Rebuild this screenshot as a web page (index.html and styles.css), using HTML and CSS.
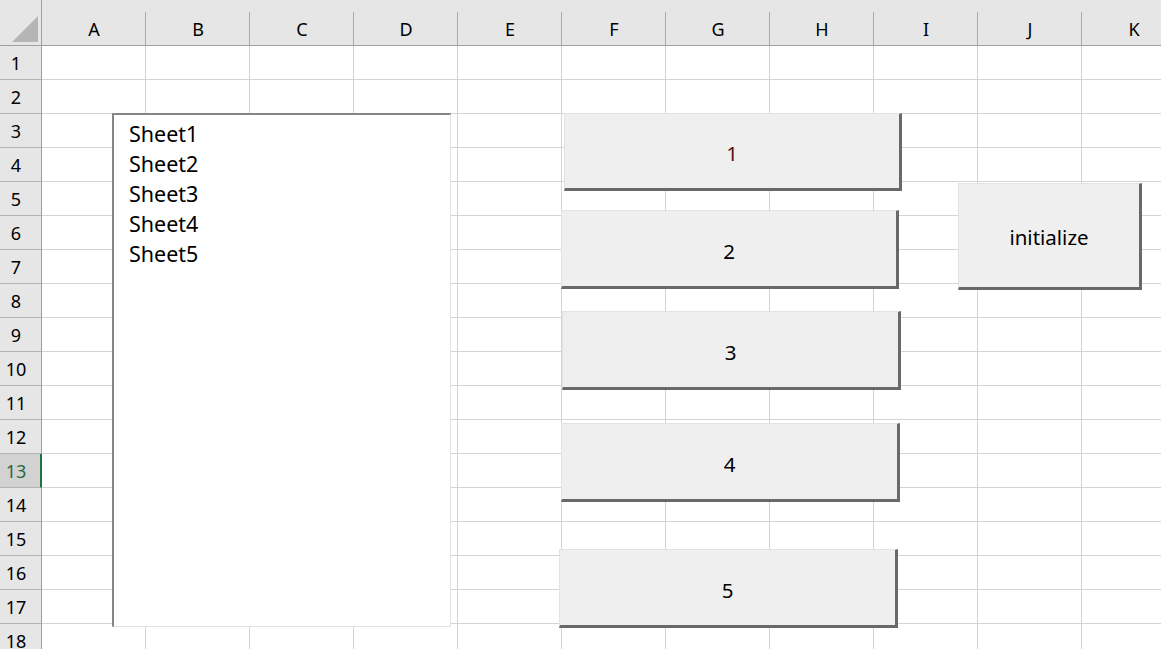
FILE: index.html
```html
<!DOCTYPE html>
<html>
<head>
<meta charset="utf-8">
<link rel="stylesheet" href="styles.css">
</head>
<body>
<div class="sheet">
  <div class="grid">
    <div class="corner"><svg class="tri" width="26" height="26" viewBox="0 0 26 26"><polygon points="26,0 26,26 0,26" fill="#b5b5b5"/></svg></div>
    <div class="ch">A</div><div class="ch">B</div><div class="ch">C</div><div class="ch">D</div><div class="ch">E</div><div class="ch">F</div><div class="ch">G</div><div class="ch">H</div><div class="ch">I</div><div class="ch">J</div><div class="ch">K</div>

    <div class="rh">1</div><div class="c"></div><div class="c"></div><div class="c"></div><div class="c"></div><div class="c"></div><div class="c"></div><div class="c"></div><div class="c"></div><div class="c"></div><div class="c"></div><div class="c"></div>
    <div class="rh">2</div><div class="c"></div><div class="c"></div><div class="c"></div><div class="c"></div><div class="c"></div><div class="c"></div><div class="c"></div><div class="c"></div><div class="c"></div><div class="c"></div><div class="c"></div>
    <div class="rh">3</div><div class="c"></div><div class="c"></div><div class="c"></div><div class="c"></div><div class="c"></div><div class="c"></div><div class="c"></div><div class="c"></div><div class="c"></div><div class="c"></div><div class="c"></div>
    <div class="rh">4</div><div class="c"></div><div class="c"></div><div class="c"></div><div class="c"></div><div class="c"></div><div class="c"></div><div class="c"></div><div class="c"></div><div class="c"></div><div class="c"></div><div class="c"></div>
    <div class="rh">5</div><div class="c"></div><div class="c"></div><div class="c"></div><div class="c"></div><div class="c"></div><div class="c"></div><div class="c"></div><div class="c"></div><div class="c"></div><div class="c"></div><div class="c"></div>
    <div class="rh">6</div><div class="c"></div><div class="c"></div><div class="c"></div><div class="c"></div><div class="c"></div><div class="c"></div><div class="c"></div><div class="c"></div><div class="c"></div><div class="c"></div><div class="c"></div>
    <div class="rh">7</div><div class="c"></div><div class="c"></div><div class="c"></div><div class="c"></div><div class="c"></div><div class="c"></div><div class="c"></div><div class="c"></div><div class="c"></div><div class="c"></div><div class="c"></div>
    <div class="rh">8</div><div class="c"></div><div class="c"></div><div class="c"></div><div class="c"></div><div class="c"></div><div class="c"></div><div class="c"></div><div class="c"></div><div class="c"></div><div class="c"></div><div class="c"></div>
    <div class="rh">9</div><div class="c"></div><div class="c"></div><div class="c"></div><div class="c"></div><div class="c"></div><div class="c"></div><div class="c"></div><div class="c"></div><div class="c"></div><div class="c"></div><div class="c"></div>
    <div class="rh">10</div><div class="c"></div><div class="c"></div><div class="c"></div><div class="c"></div><div class="c"></div><div class="c"></div><div class="c"></div><div class="c"></div><div class="c"></div><div class="c"></div><div class="c"></div>
    <div class="rh">11</div><div class="c"></div><div class="c"></div><div class="c"></div><div class="c"></div><div class="c"></div><div class="c"></div><div class="c"></div><div class="c"></div><div class="c"></div><div class="c"></div><div class="c"></div>
    <div class="rh">12</div><div class="c"></div><div class="c"></div><div class="c"></div><div class="c"></div><div class="c"></div><div class="c"></div><div class="c"></div><div class="c"></div><div class="c"></div><div class="c"></div><div class="c"></div>
    <div class="rh active">13</div><div class="c"></div><div class="c"></div><div class="c"></div><div class="c"></div><div class="c"></div><div class="c"></div><div class="c"></div><div class="c"></div><div class="c"></div><div class="c"></div><div class="c"></div>
    <div class="rh">14</div><div class="c"></div><div class="c"></div><div class="c"></div><div class="c"></div><div class="c"></div><div class="c"></div><div class="c"></div><div class="c"></div><div class="c"></div><div class="c"></div><div class="c"></div>
    <div class="rh">15</div><div class="c"></div><div class="c"></div><div class="c"></div><div class="c"></div><div class="c"></div><div class="c"></div><div class="c"></div><div class="c"></div><div class="c"></div><div class="c"></div><div class="c"></div>
    <div class="rh">16</div><div class="c"></div><div class="c"></div><div class="c"></div><div class="c"></div><div class="c"></div><div class="c"></div><div class="c"></div><div class="c"></div><div class="c"></div><div class="c"></div><div class="c"></div>
    <div class="rh">17</div><div class="c"></div><div class="c"></div><div class="c"></div><div class="c"></div><div class="c"></div><div class="c"></div><div class="c"></div><div class="c"></div><div class="c"></div><div class="c"></div><div class="c"></div>
    <div class="rh">18</div><div class="c"></div><div class="c"></div><div class="c"></div><div class="c"></div><div class="c"></div><div class="c"></div><div class="c"></div><div class="c"></div><div class="c"></div><div class="c"></div><div class="c"></div>
  </div>

  <div class="listbox">
    <div class="item">Sheet1</div>
    <div class="item">Sheet2</div>
    <div class="item">Sheet3</div>
    <div class="item">Sheet4</div>
    <div class="item">Sheet5</div>
  </div>

  <div class="btn b1"><span class="red">1</span></div>
  <div class="btn b2">2</div>
  <div class="btn b3">3</div>
  <div class="btn b4">4</div>
  <div class="btn b5">5</div>
  <div class="btn binit">initialize</div>
</div>
</body>
</html>
```

FILE: styles.css
```css
html, body {
  margin: 0;
  padding: 0;
  background: #ffffff;
  overflow: hidden;
}

.sheet {
  position: relative;
  width: 1161px;
  height: 649px;
  overflow: hidden;
  font-family: "Noto Sans", "Open Sans", sans-serif;
  color: #000;
}

.grid {
  display: grid;
  grid-template-columns: 42px repeat(11, 104px);
  grid-template-rows: 46px repeat(18, 34px);
  width: 1186px;
}

.corner {
  box-sizing: border-box;
  background: #e6e6e6;
  border-right: 1px solid #9f9f9f;
  border-bottom: 1px solid #9f9f9f;
  display: flex;
  align-items: flex-end;
  justify-content: flex-end;
  padding: 0 3px 3px 0;
}

.tri { display: block; }

.ch {
  box-sizing: border-box;
  background: linear-gradient(#ababab, #ababab) right bottom / 1px 33px no-repeat, #e6e6e6;
  border-bottom: 1px solid #9f9f9f;
  display: flex;
  align-items: center;
  justify-content: center;
  padding-top: 12px;
  font-size: 18px;
  line-height: 20px;
}

.rh {
  box-sizing: border-box;
  background: #e6e6e6;
  border-right: 1px solid #9f9f9f;
  border-bottom: 1px solid #b4b4b4;
  display: flex;
  align-items: center;
  justify-content: center;
  padding-right: 9px;
  font-size: 18px;
  line-height: 20px;
}

.rh.active {
  background: #d2d2d2;
  color: #1e6b41;
  border-right: 2px solid #217346;
  padding-right: 8px;
}

.c {
  box-sizing: border-box;
  border-right: 1px solid #d4d4d4;
  border-bottom: 1px solid #d4d4d4;
  background: #fff;
}

.listbox {
  position: absolute;
  left: 112px;
  top: 113px;
  width: 339px;
  height: 514px;
  box-sizing: border-box;
  background: #fff;
  border-top: 2px solid #858585;
  border-left: 2px solid #858585;
  border-right: 1px solid #e2e2e2;
  border-bottom: 1px solid #e2e2e2;
  padding: 4px 0 0 15px;
  font-size: 21.5px;
  line-height: 30px;
}

.btn {
  position: absolute;
  box-sizing: border-box;
  background: #efefef;
  border-top: 1px solid #e2e2e2;
  border-left: 1px solid #e2e2e2;
  border-right: 3px solid #696969;
  border-bottom: 3px solid #696969;
  display: flex;
  align-items: center;
  justify-content: center;
  font-size: 20.5px;
  line-height: 24px;
  padding-top: 4px;
}

.red { color: #5a1010; }

.b1 { left: 564px; top: 113px; width: 338px; height: 78px; }
.b2 { left: 561px; top: 210px; width: 338px; height: 79px; }
.b3 { left: 562px; top: 311px; width: 339px; height: 79px; }
.b4 { left: 561px; top: 423px; width: 339px; height: 79px; }
.b5 { left: 559px; top: 549px; width: 339px; height: 79px; }
.binit { left: 958px; top: 183px; width: 184px; height: 107px; padding-top: 2px; }
```
